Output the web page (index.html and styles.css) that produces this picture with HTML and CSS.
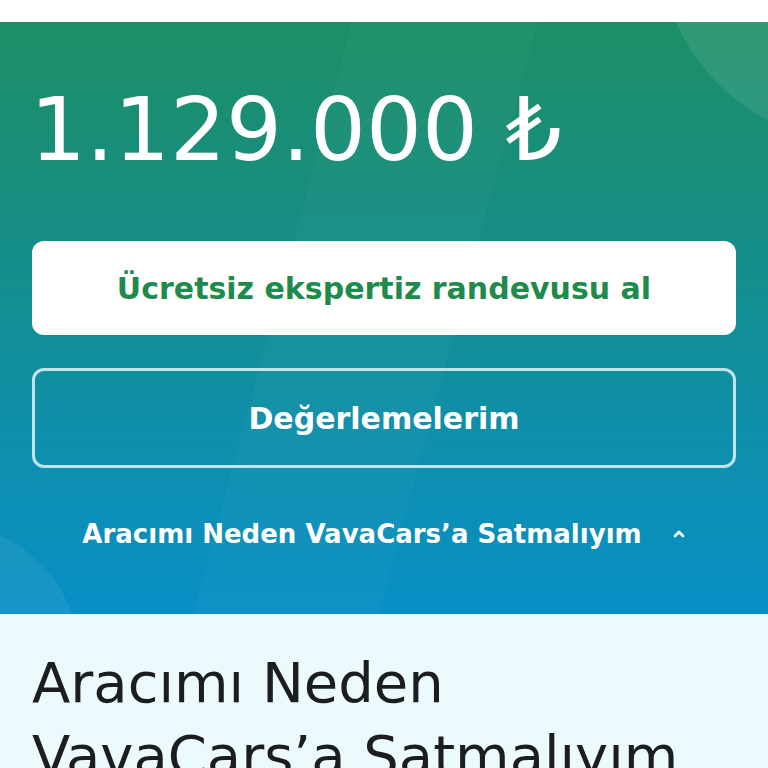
FILE: index.html
```html
<!DOCTYPE html>
<html lang="tr">
<head>
  <meta charset="UTF-8">
  <title>Değerleme sonucu</title>
  <link rel="stylesheet" href="styles.css">
</head>
<body>
  <div class="ust-bosluk"></div>
  <section class="teklif">
    <div class="fiyat">1.129.000 ₺</div>
    <button class="btn-randevu" type="button">Ücretsiz ekspertiz randevusu al</button>
    <button class="btn-degerleme" type="button">Değerlemelerim</button>
    <a class="neden-link" href="#neden">
      Aracımı Neden VavaCars’a Satmalıyım
      <svg width="14" height="10" viewBox="0 0 14 10"><path d="M3 7 L7 3 L11 7" fill="none" stroke="#fff" stroke-width="2.6" stroke-linecap="round" stroke-linejoin="round"/></svg>
    </a>
  </section>
  <section class="neden" id="neden">
    <h2>Aracımı Neden VavaCars’a Satmalıyım</h2>
  </section>
</body>
</html>
```

FILE: styles.css
```css
body { margin: 0; font-family: "DejaVu Sans", Inter, sans-serif; background: #fff; overflow: hidden; }
.ust-bosluk { height: 22px; background: #fff; }
.teklif {
  padding: 64px 32px 65px;
  background:
    radial-gradient(circle at 860px -80px, rgba(255,255,255,0.09) 0, rgba(255,255,255,0.09) 200px, transparent 201px),
    linear-gradient(105deg, transparent 38%, rgba(255,255,255,0.025) 38%, rgba(255,255,255,0.025) 58%, transparent 58%),
    radial-gradient(circle at -60px 640px, rgba(255,255,255,0.06) 0, rgba(255,255,255,0.06) 140px, transparent 141px),
    linear-gradient(180deg, #1c8f66 0%, #178d7f 30%, #0f8fa6 65%, #088fc6 100%);
  display: flex; flex-direction: column; align-items: stretch;
}
.fiyat { color: #fff; font-size: 88px; font-weight: 400; line-height: 1; margin-left: -2px; }
.btn-randevu {
  margin-top: 67px; height: 94px; border: none; border-radius: 12px; background: #fff;
  color: #1e8a4b; font-family: inherit; font-size: 30px; font-weight: 700;
}
.btn-degerleme {
  margin-top: 33px; height: 100px; border: 3px solid rgba(255,255,255,0.75); border-radius: 12px; background: transparent;
  color: #fff; font-family: inherit; font-size: 30px; font-weight: 700;
}
.neden-link {
  margin-top: 51px; align-self: center; display: flex; align-items: center; gap: 30px;
  color: #fff; text-decoration: none; font-size: 26px; font-weight: 700;
}
.neden { background: #edfafd; padding: 32px 32px 40px; }
.neden h2 { margin: 0; font-size: 56px; font-weight: 400; line-height: 73px; color: #1b1d1f; max-width: 700px; }
```
